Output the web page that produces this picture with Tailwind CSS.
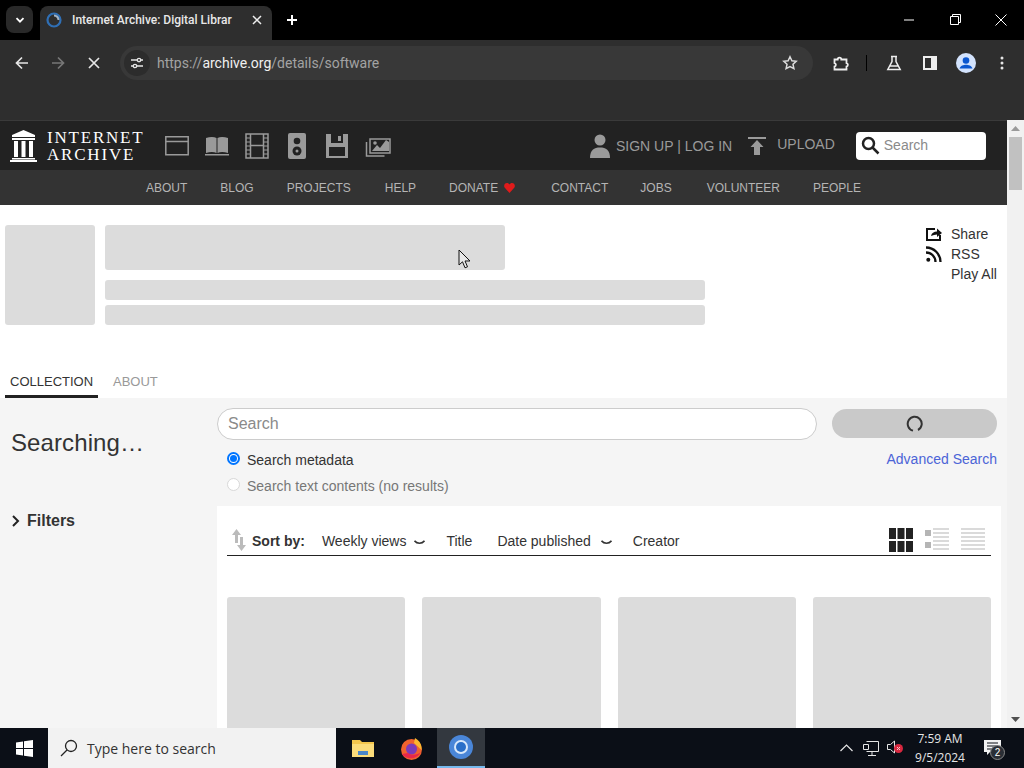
<!DOCTYPE html>
<html>
<head>
    <title>Internet Archive: Digital Library</title>
    <script src="https://cdn.jsdelivr.net/npm/@tailwindcss/browser@4"></script>
</head>
<body class="relative w-[1024px] h-[768px] overflow-hidden bg-black font-['Liberation_Sans',sans-serif]">

    <!-- tab strip -->
    <div class="h-10 bg-black flex items-end text-white">
        <div class="w-[27px] h-[27px] mb-[7px] ml-[6px] rounded-lg bg-[#292929] flex items-center justify-center">
            <svg width="10" height="10" viewBox="0 0 10 10" fill="none" stroke="#fff" stroke-width="1.8"><path d="M1.5 3.2 5 6.7l3.5-3.5"/></svg>
        </div>
        <div class="w-[232px] h-[34px] ml-[7px] bg-[#2e2e2e] rounded-t-lg flex items-center pl-[6px] pr-[10px] pb-[6px]">
            <svg width="16" height="16" viewBox="0 0 16 16" fill="none"><circle cx="8" cy="8" r="6.500" stroke="#2f6fb5" stroke-width="2.200"/><path d="M8 3.500a4.500 4.500 0 0 1 4.500 4.500" stroke="#a5b4c4" stroke-width="2"/></svg>
            <div class="ml-[10px] w-[166px] overflow-hidden whitespace-nowrap text-[12px] font-medium font-['Roboto',sans-serif] text-[#e8e8e8]">Internet Archive: Digital Librar</div>
            <svg class="ml-auto" width="10" height="10" viewBox="0 0 10 10" fill="none" stroke="#eee" stroke-width="1.500"><path d="m1 1 8 8M9 1 1 9"/></svg>
        </div>
        <svg class="mb-[14px] ml-[14px]" width="12" height="12" viewBox="0 0 12 12" fill="none" stroke="#fff" stroke-width="2"><path d="M6 1v10M1 6h10"/></svg>
        <div class="ml-auto flex items-center h-10 pb-[1px]">
            <div class="w-[46px] flex justify-center"><svg width="10" height="10" viewBox="0 0 10 10" stroke="#fff"><path d="M0 5h10"/></svg></div>
            <div class="w-[46px] flex justify-center"><svg width="11" height="11" viewBox="0 0 11 11" fill="none" stroke="#fff"><path d="M.5 2.500h8v8h-8zM2.500 2.500v-2h8v8h-2"/></svg></div>
            <div class="w-[46px] flex justify-center"><svg width="12" height="12" viewBox="0 0 12 12" stroke="#fff"><path d="m.5.500 11 11M11.500.500l-11 11"/></svg></div>
        </div>
    </div>

    <!-- toolbar -->
    <div class="h-20 bg-[#2e2e2e]">
        <div class="h-10 flex items-center pt-[6px]">
            <svg class="ml-[15px]" width="14" height="14" viewBox="0 0 14 14" fill="none" stroke="#e6e6e6" stroke-width="1.700"><path d="M13 7H2M7 1.500 1.500 7 7 12.500"/></svg>
            <svg class="ml-[22px]" width="14" height="14" viewBox="0 0 14 14" fill="none" stroke="#777" stroke-width="1.700"><path d="M1 7h11M7 1.500 12.500 7 7 12.500"/></svg>
            <svg class="ml-[23px]" width="12" height="12" viewBox="0 0 12 12" fill="none" stroke="#e6e6e6" stroke-width="1.700"><path d="m1 1 10 10M11 1 1 11"/></svg>
            <div class="ml-[20px] w-[693px] h-[34px] rounded-full bg-[#383838] flex items-center">
                <div class="ml-[4px] w-[26px] h-[26px] rounded-full bg-[#2c2c2c] flex items-center justify-center">
                    <svg width="14" height="12" viewBox="0 0 14 12" fill="none" stroke="#e6e6e6" stroke-width="1.300"><path d="M1 3h6M11 3h2M1 9h2M7 9h6"/><circle cx="9" cy="3" r="1.700"/><circle cx="5" cy="9" r="1.700"/></svg>
                </div>
                <div class="ml-[7px] text-[14px] font-['Roboto',sans-serif] text-[#a3a3a3] whitespace-nowrap">https://<span class="text-[#f0f0f0]">archive.org</span>/details/software</div>
                <svg class="ml-auto mr-[15px]" width="16" height="16" viewBox="0 0 16 16" fill="none" stroke="#ddd" stroke-width="1.500"><path d="m8 1.800 1.900 4 4.300.5-3.200 3 .9 4.300L8 11.500l-3.900 2.100.9-4.300-3.200-3 4.300-.5z"/></svg>
            </div>
            <svg class="ml-[20px]" width="16" height="16" viewBox="0 0 16 16" fill="none" stroke="#eee" stroke-width="1.800"><path d="M1.500 4.500h3.200a1.800 1.800 0 0 1 3.600 0h5.200V8a1.800 1.800 0 0 1 0 3.500v3h-12v-3a1.800 1.800 0 0 0 0-3.500z"/></svg>
            <div class="ml-[17px] w-[1px] h-[16px] bg-black"></div>
            <svg class="ml-[19px]" width="16" height="16" viewBox="0 0 16 16" fill="none" stroke="#eee" stroke-width="1.500"><path d="M5 1.500h6M6 1.500v5L1.800 14.500h12.400L10 6.500v-5M4 11h8"/></svg>
            <svg class="ml-[21px]" width="14" height="14" viewBox="0 0 14 14"><path d="M0 0h14v14H0z" fill="#eee"/><path d="M2 2h6v10H2z" fill="#2e2e2e"/></svg>
            <svg class="ml-[19px]" width="20" height="20" viewBox="0 0 20 20"><circle cx="10" cy="10" r="10" fill="#d3e3fd"/><circle cx="10" cy="7.500" r="3.300" fill="#0b57d0"/><path d="M3.500 15.500c1-3 4-3.800 6.500-3.800s5.500.8 6.500 3.800z" fill="#0b57d0"/></svg>
            <svg class="ml-[24px]" width="4" height="14" viewBox="0 0 4 14" fill="#e6e6e6"><circle cx="2" cy="2" r="1.500"/><circle cx="2" cy="7" r="1.500"/><circle cx="2" cy="12" r="1.500"/></svg>
        </div>
    </div>

    <!-- browser viewport -->
    <div class="flex h-[608px] bg-white">
        <div class="w-[1007px] h-[608px] overflow-hidden">

            <!-- archive.org nav -->
            <div class="h-[50px] bg-[#222] border-t border-[#3a3a3a] flex items-center">
                <svg class="ml-[10px]" width="27" height="32" viewBox="0 0 27 32" fill="#fff"><path d="M13.500 0 25 5v2H2V5zM2 8h23v2H2zM4 11h4v16H4zM11.500 11h4v16h-4zM19 11h4v16h-4zM2 28h23v1.500H2zM0 30h27v2H0z"/></svg>
                <div class="ml-[10px] w-[98px] font-['Liberation_Serif',serif] text-white text-[17px] leading-[17px] tracking-[1.800px] whitespace-nowrap">INTERNET<br>ARCHIVE</div>
                <div class="ml-[20px] flex items-center gap-[16px]">
                    <svg width="24" height="20" viewBox="0 0 24 20" fill="none" stroke="#9a9a9a" stroke-width="1.500"><path d="M.8.800h22.400v18H.8zM.8 5.500h22.400"/></svg>
                    <svg width="24" height="20" viewBox="0 0 24 20" fill="#9a9a9a"><path d="M1 2c4-1.500 8-1.500 10.500 0v15C9 15.500 5 15.500 1 17zM23 2c-4-1.500-8-1.500-10.500 0v15c2.500-1.500 6.500-1.500 10.500 0zM0 18h24v1.500H0z"/></svg>
                    <svg width="24" height="26" viewBox="0 0 24 26" fill="none" stroke="#9a9a9a" stroke-width="1.500"><path d="M1 1h22v24H1zM5.500 1v24M18.500 1v24M5.500 12.500h13"/><path d="M1 5h4M1 9h4M1 13h4M1 17h4M1 21h4M19 5h4M19 9h4M19 13h4M19 17h4M19 21h4" stroke-width="1.200"/></svg>
                    <svg class="ml-[3px]" width="18" height="26" viewBox="0 0 18 26"><rect width="18" height="26" rx="2" fill="#9a9a9a"/><circle cx="9" cy="8" r="3.300" fill="#222"/><circle cx="9" cy="18" r="4.500" fill="#222"/><circle cx="9" cy="18" r="1.500" fill="#9a9a9a"/></svg>
                    <svg class="ml-[3px]" width="24" height="26" viewBox="0 0 24 26"><path d="M1 1h22v24H1z" fill="#9a9a9a"/><path d="M6 1h12v9H6z" fill="#222"/><path d="M13 3h3v5h-3z" fill="#9a9a9a"/><path d="M4 14h16v9H4z" fill="#222"/></svg>
                    <svg width="26" height="22" viewBox="0 0 26 22" fill="none" stroke="#9a9a9a" stroke-width="1.500"><path d="M1.500 7v14h18"/><path d="M5 4h20v14H5z" stroke-width="1.500"/><path d="M7 16l5-6 3 3 6-8 3 2v9z" fill="#9a9a9a" stroke="none"/><circle cx="10" cy="8" r="1.800" fill="#9a9a9a" stroke="none"/></svg>
                </div>
                <svg class="ml-[199px]" width="20" height="24" viewBox="0 0 20 24" fill="#9a9a9a"><circle cx="10" cy="6" r="5.500"/><path d="M0 24c0-8 4-10.500 10-10.500S20 16 20 24z"/></svg>
                <div class="ml-[6px] mt-[2px] text-[14px] text-[#9a9a9a] whitespace-nowrap">SIGN UP | LOG IN</div>
                <svg class="ml-[16px]" width="18" height="18" viewBox="0 0 18 18" fill="#9a9a9a"><path d="M0 0h18v2H0zM9 3l6.500 7H12v8H6v-8H2.500z"/></svg>
                <div class="ml-[11px] text-[14px] text-[#9a9a9a] mb-[2px]">UPLOAD</div>
                <div class="ml-[21px] w-[130px] h-[28px] bg-white rounded-[4px] flex items-center">
                    <svg class="ml-[5px]" width="19" height="19" viewBox="0 0 19 19" fill="none" stroke="#222" stroke-width="2.500"><circle cx="7.500" cy="7.500" r="5.500"/><path d="m11.500 11.500 6 6"/></svg>
                    <div class="ml-[4px] text-[14px] text-[#8a8a8a]">Search</div>
                </div>
            </div>
            <div class="h-[35px] bg-[#333] flex items-center pl-[146px] gap-[33px] text-[12px] text-[#b5b5b5] whitespace-nowrap">
                <span>ABOUT</span><span>BLOG</span><span>PROJECTS</span><span class="ml-[1px]">HELP</span>
                <span class="flex items-center gap-[6px]">DONATE <svg width="11" height="10" viewBox="0 0 11 10" fill="#e01b1b"><path d="M5.500 10 .8 4.800C-.8 2.600.8 0 3 0c1.100 0 2 .6 2.500 1.500C6 .6 6.900 0 8 0c2.200 0 3.800 2.600 2.200 4.800z"/></svg></span>
                <span class="ml-[3px]">CONTACT</span><span class="ml-[-1px]">JOBS</span><span class="ml-[2px]">VOLUNTEER</span><span>PEOPLE</span>
            </div>

            <!-- collection header, still loading -->
            <div class="h-[193px] bg-white relative">
                <div class="flex pt-[20px] pl-[5px]">
                    <div class="w-[90px] h-[100px] rounded-[3px] bg-[#dcdcdc]"></div>
                    <div class="ml-[10px] w-[600px]">
                        <div class="w-[400px] h-[45px] rounded-[3px] bg-[#dcdcdc]"></div>
                        <div class="mt-[10px] h-[20px] rounded-[3px] bg-[#dcdcdc]"></div>
                        <div class="mt-[5px] h-[20px] rounded-[3px] bg-[#dcdcdc]"></div>
                    </div>
                    <div class="ml-[221px] mt-[-1px] text-[14px] leading-[20px] text-[#333] w-[80px]">
                        <div class="flex items-center h-[20px]">
                            <svg width="16" height="14" viewBox="0 0 16 14" fill="none" stroke="#111" stroke-width="2"><path d="M9 2H1v11h13V8"/><path d="M5 9c.5-3 3-4.500 6-4.500V1.500L16 6l-5 4V7.500C9 7.500 7 8 5 9z" fill="#111" stroke="none"/></svg>
                            <span class="ml-[9px]">Share</span>
                        </div>
                        <div class="flex items-center h-[20px]">
                            <svg width="16" height="16" viewBox="0 0 16 16" fill="none" stroke="#111" stroke-width="2.300"><path d="M0 6.500a9.500 9.500 0 0 1 9.500 9.500M0 1.500A14.500 14.500 0 0 1 14.500 16"/><circle cx="2.300" cy="13.700" r="2" fill="#111" stroke="none"/></svg>
                            <span class="ml-[9px]">RSS</span>
                        </div>
                        <div class="h-[20px] pl-[25px] whitespace-nowrap">Play All</div>
                    </div>
                </div>
                <div class="absolute left-0 bottom-0 flex text-[13px] pl-[5px] h-[37px]">
                    <div class="w-[93px] pl-[5px] pt-[11px] text-[#333] border-b-[3px] border-[#222]">COLLECTION</div>
                    <div class="ml-[15px] pt-[11px] text-[#999]">ABOUT</div>
                </div>
            </div>

            <!-- results -->
            <div class="h-[330px] bg-[#f5f5f5] flex">
                <div class="w-[217px] shrink-0 pl-[11px]">
                    <div class="mt-[30px] text-[24px] leading-[30px] text-[#333] tracking-[0.100px]">Searching…</div>
                    <div class="mt-[51px] flex items-center">
                        <svg width="11" height="12" viewBox="0 0 11 12" fill="none" stroke="#222" stroke-width="2"><path d="m2 1 5 5-5 5"/></svg>
                        <span class="ml-[5px] text-[16px] font-bold text-[#333]">Filters</span>
                    </div>
                </div>
                <div class="flex-1 min-w-0">
                    <div class="flex mt-[10px]">
                        <div class="w-[600px] h-[32px] rounded-full bg-white border border-[#ccc] pl-[10px] text-[16px] leading-[30px] text-[#8a8a8a]">Search</div>
                        <div class="ml-[15px] mt-[1px] w-[165px] h-[29px] rounded-full bg-[#c9c9c9] flex items-center justify-center">
                            <svg width="18" height="18" viewBox="0 0 18 18" fill="none" stroke="#333" stroke-width="2"><path d="M12 15a7 7 0 1 0-5 .6"/></svg>
                        </div>
                    </div>
                    <div class="flex mt-[10px] w-[780px] text-[14px] leading-[20px]">
                        <div>
                            <div class="flex items-center h-[20px] text-[#333]">
                                <div class="w-[13px] h-[13px] ml-[10px] mb-[3px] rounded-full border-2 border-[#0075ff] bg-white flex items-center justify-center"><div class="w-[7px] h-[7px] rounded-full bg-[#0075ff]"></div></div>
                                <span class="ml-[7px]">Search metadata</span>
                            </div>
                            <div class="flex items-center h-[20px] mt-[6px] text-[#777]">
                                <div class="w-[13px] h-[13px] ml-[10px] mb-[3px] rounded-full border border-[#d8d8d8] bg-white"></div>
                                <span class="ml-[7px]">Search text contents (no results)</span>
                            </div>
                        </div>
                        <div class="ml-auto mt-[-1px] text-[#4b64d7]">Advanced Search</div>
                    </div>
                    <div class="mt-[10px] w-[784px] h-[230px] bg-white px-[10px] pt-[18px]">
                        <div class="flex items-center h-[32px] pt-[4px] border-b border-[#222] text-[14px] text-[#333] whitespace-nowrap">
                            <svg class="ml-[5px] mb-[3px]" width="14" height="22" viewBox="0 0 14 22" fill="#bbb"><path d="M4.500 0 9 6H6v8H3V6H0zM9.500 22 5 16h3V8h3v8h3z"/></svg>
                            <span class="ml-[6px] font-bold">Sort by:</span>
                            <span class="ml-[17px]">Weekly views</span>
                            <svg class="ml-[8px] mt-[2px]" width="11" height="5" viewBox="0 0 11 5" fill="none" stroke="#333" stroke-width="1.500"><path d="M.5.800C3 4 8 4 10.500.800"/></svg>
                            <span class="ml-[21px]">Title</span>
                            <span class="ml-[25px]">Date published</span>
                            <svg class="ml-[10px] mt-[2px]" width="11" height="5" viewBox="0 0 11 5" fill="none" stroke="#333" stroke-width="1.500"><path d="M.5.800C3 4 8 4 10.500.800"/></svg>
                            <span class="ml-[21px]">Creator</span>
                            <svg class="ml-auto mb-[4px]" width="24" height="24" viewBox="0 0 24 24" fill="#222"><path d="M0 0h7v11H0zM8.500 0h7v11h-7zM17 0h7v11h-7zM0 13h7v11H0zM8.500 13h7v11h-7zM17 13h7v11h-7z"/></svg>
                            <svg class="ml-[12px] mb-[4px]" width="24" height="24" viewBox="0 0 24 24" fill="none" stroke="#b5b5b5" stroke-width="1.200"><path d="M0 2h6v6H0zM0 14h6v6H0z" fill="#b5b5b5" stroke="none"/><path d="M8 1h16M8 5h16M8 9h16M8 13h16M8 17h16M8 21h16"/></svg>
                            <svg class="ml-[12px] mr-[6px] mb-[4px]" width="24" height="24" viewBox="0 0 24 24" fill="none" stroke="#b5b5b5" stroke-width="1.200"><path d="M0 1h24M0 5h24M0 9h24M0 13h24M0 17h24M0 21h24"/></svg>
                        </div>
                        <div class="grid grid-cols-4 gap-x-[17px] mt-[41px] w-[764px]">
                            <div class="h-[140px] rounded-[3px] bg-[#dcdcdc]"></div>
                            <div class="h-[140px] rounded-[3px] bg-[#dcdcdc]"></div>
                            <div class="h-[140px] rounded-[3px] bg-[#dcdcdc]"></div>
                            <div class="h-[140px] rounded-[3px] bg-[#dcdcdc]"></div>
                        </div>
                    </div>
                </div>
            </div>
        </div>

        <!-- scrollbar -->
        <div class="w-[17px] h-[608px] bg-[#f1f1f1] flex flex-col items-center">
            <svg class="mt-[6px]" width="9" height="5" viewBox="0 0 9 5" fill="#9a9a9a"><path d="M4.500 0 9 5H0z"/></svg>
            <div class="mt-[6px] w-[13px] h-[53px] bg-[#c1c1c1]"></div>
            <svg class="mt-auto mb-[6px]" width="9" height="5" viewBox="0 0 9 5" fill="#505050"><path d="M4.500 5 9 0H0z"/></svg>
        </div>
    </div>

    <!-- windows taskbar -->
    <div class="h-10 bg-[#0b0f17] flex items-center text-white">
        <svg class="ml-[16px]" width="17" height="17" viewBox="0 0 17 17" fill="#fff"><path d="M0 2.400 7 1.400v6.600H0zM8 1.300 17 0v8H8zM0 9h7v6.600L0 14.600zM8 9h9v8l-9-1.300z"/></svg>
        <div class="ml-[15px] w-[288px] h-10 bg-[#f2f2f2] flex items-center">
            <svg class="ml-[12px]" width="18" height="18" viewBox="0 0 18 18" fill="none" stroke="#222" stroke-width="1.300"><circle cx="11" cy="7" r="5.500"/><path d="M7 11 1 17"/></svg>
            <span class="ml-[9px] mt-[1px] text-[14px] text-[#333] font-['Open_Sans',sans-serif] whitespace-nowrap">Type here to search</span>
        </div>
        <div class="w-[50px] h-10 flex items-center justify-center pl-[3px]">
            <svg width="22" height="18" viewBox="0 0 22 18"><path d="M0 1h8l2 2h12v15H0z" fill="#f3c64d"/><path d="M0 5h22v13H0z" fill="#fbdc7a"/><path d="M6 12h10v4H6z" fill="#4a86c8"/></svg>
        </div>
        <div class="w-[51px] h-10 flex items-center justify-center">
            <svg width="23" height="23" viewBox="0 0 23 23"><circle cx="11.500" cy="12.500" r="10.500" fill="#f0622e"/><path d="M15 1c5 3 7 7 6.500 12L14 6z" fill="#fbb62e"/><circle cx="11.500" cy="12" r="5.500" fill="#7c3bb8"/><path d="M2 17c3 5 14 7 19-2-3 3-10 4-13 1z" fill="#e8274b"/></svg>
        </div>
        <div class="w-[48px] h-10 bg-[#33383f] border-b-2 border-[#76b9ed] flex items-center justify-center">
            <svg width="24" height="24" viewBox="0 0 24 24"><circle cx="12" cy="12" r="12" fill="#4a86d8"/><circle cx="12" cy="12" r="7" fill="#d9e8fa"/><circle cx="12" cy="12" r="5" fill="#2a6fc9"/></svg>
        </div>
        <svg class="ml-[355px]" width="13" height="8" viewBox="0 0 13 8" fill="none" stroke="#e6e6e6" stroke-width="1.200"><path d="m.5 7 6-6 6 6"/></svg>
        <svg class="ml-[10px]" width="16" height="15" viewBox="0 0 16 15" fill="none" stroke="#e6e6e6"><path d="M3.500.5h12v10h-12M9 10.500V14M5 14.500h8"/><path d="M.5 3.500h5v5h-5z" fill="#0b0f17"/></svg>
        <div class="ml-[8px] relative w-[16px] h-[16px]">
            <svg width="9" height="14" viewBox="0 0 9 14" fill="none" stroke="#e6e6e6"><path d="M.5 4.500h3l4-3.500v12l-4-3.500h-3z"/></svg>
            <svg class="absolute left-[7px] top-[4px]" width="9" height="9" viewBox="0 0 9 9"><circle cx="4.500" cy="4.500" r="4.500" fill="#d8283f"/><path d="m3 3 3 3M6 3 3 6" stroke="#f7c6cc"/></svg>
        </div>
        <div class="ml-[8px] w-[58px] text-center text-[12px] leading-[19px] font-['Open_Sans',sans-serif] text-[#e6e6e6] whitespace-nowrap">7:59 AM<br>9/5/2024</div>
        <div class="ml-[15px] relative w-[18px] h-[16px]">
            <svg width="17" height="15" viewBox="0 0 17 15"><path d="M0 0h17v12H6l-3 3v-3H0z" fill="#f2f2f2"/><path d="M3 3h11M3 6h11M3 9h7" stroke="#0b0f17"/></svg>
            <div class="absolute left-[6px] top-[5px] w-[15px] h-[15px] rounded-full bg-[#2a2e35] border border-[#888] text-[10px] leading-[13px] text-center">2</div>
        </div>
    </div>

    <!-- mouse pointer -->
    <svg class="absolute left-[458px] top-[249px]" width="13" height="20" viewBox="0 0 13 20"><path d="M1 1v15l3.500-3.200 2.500 6 2.500-1-2.500-5.800H12z" fill="#e8e8e8" stroke="#111"/></svg>
</body>
</html>
